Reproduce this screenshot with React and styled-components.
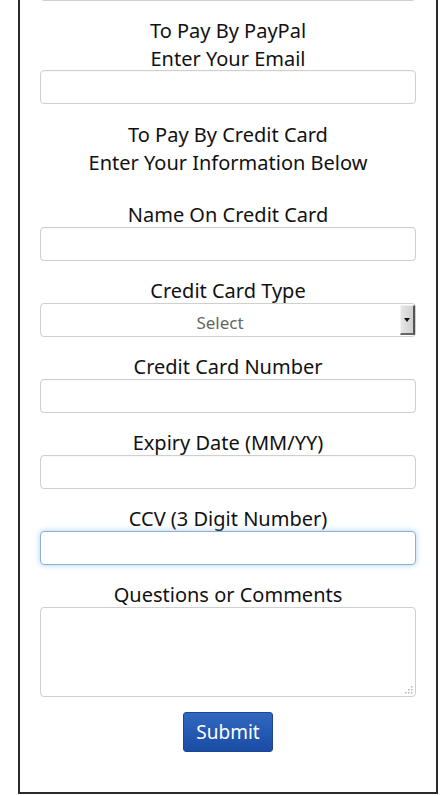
import React from "react";
import styled, { createGlobalStyle } from "styled-components";

const GlobalStyle = createGlobalStyle`
  html, body { margin: 0; padding: 0; background: #fff; }
  body { font-family: "Noto Sans", "DejaVu Sans", sans-serif; color: #111; overflow: hidden; }
`;

const Page = styled.div`
  padding: 0 10px 3px 18px;
  overflow: hidden;
`;

const Frame = styled.form`
  margin-top: -33px;
  border: 2px solid #2b2b2b;
  border-top: none;
  padding: 0 20px 40px;
  box-sizing: border-box;
  width: 420px;
  display: flex;
  flex-direction: column;
`;

const Heading = styled.div`
  margin-top: ${(p) => p.$top}px;
  margin-bottom: ${(p) => p.$bottom}px;
  font-size: 20px;
  line-height: 28px;
  text-align: center;
`;

const Field = styled.div`
  margin-top: ${(p) => p.$top ?? 18}px;
  display: flex;
  flex-direction: column;
`;

const Label = styled.label`
  font-size: 20px;
  line-height: 24px;
  text-align: center;
`;

const TextInput = styled.input`
  box-sizing: border-box;
  width: 100%;
  height: 34px;
  margin: 0;
  border: 1px solid ${(p) => (p.$focused ? "#8fb0cc" : "#cfcfcf")};
  border-radius: 4px;
  background: #fff;
  box-shadow: ${(p) =>
    p.$focused ? "0 0 6px rgba(102, 175, 233, 0.55)" : "inset 0 1px 1px rgba(0,0,0,0.03)"};
  font: inherit;
  font-size: 16px;
  padding: 0 10px;
  outline: none;
`;

const SelectWrap = styled.div`
  position: relative;
  height: 34px;
`;

const Select = styled.select`
  box-sizing: border-box;
  appearance: none;
  -webkit-appearance: none;
  width: 100%;
  height: 34px;
  margin: 0;
  border: 1px solid #cfcfcf;
  border-radius: 4px;
  background: #fff;
  font-family: inherit;
  font-size: 17px;
  color: #666;
  text-align: center;
  text-align-last: center;
  padding: 4px 16px 0 0;
  outline: none;
`;

const DropButton = styled.span`
  position: absolute;
  right: 1px;
  top: 2px;
  width: 15px;
  height: 30px;
  box-sizing: border-box;
  background: linear-gradient(to right, #e6e6e6, #cfcfcf);
  border-left: 1px solid #f4f4f4;
  border-right: 2px solid #555;
  border-bottom: 2px solid #666;
  border-top: 1px solid #eee;
  display: flex;
  align-items: center;
  justify-content: center;
  pointer-events: none;
  &::after {
    content: "";
    width: 0;
    height: 0;
    border-left: 3px solid transparent;
    border-right: 3px solid transparent;
    border-top: 4px solid #111;
  }
`;

const TextAreaWrap = styled.div`
  position: relative;
  height: 90px;
`;

const TextArea = styled.textarea`
  box-sizing: border-box;
  width: 100%;
  height: 90px;
  margin: 0;
  border: 1px solid #cfcfcf;
  border-radius: 4px;
  resize: none;
  font: inherit;
  font-size: 16px;
  display: block;
  outline: none;
`;

const Grip = styled.svg`
  position: absolute;
  right: 3px;
  bottom: 3px;
  width: 9px;
  height: 9px;
  pointer-events: none;
`;

const SubmitButton = styled.button`
  margin: 15px auto 0;
  width: 90px;
  height: 40px;
  border: 1px solid #1b4595;
  border-radius: 3px;
  background: linear-gradient(to bottom, #3068c0, #1a4ca4);
  color: #fff;
  font-family: inherit;
  font-size: 19px;
  line-height: 1;
  padding: 0;
  cursor: pointer;
`;

export default function App() {
  return (
    <Page>
      <GlobalStyle />
      <Frame onSubmit={(e) => e.preventDefault()}>
        <TextInput aria-label="previous field" />
        <Heading $top={16} $bottom={-3}>
          To Pay By PayPal
          <br />
          Enter Your Email
        </Heading>
        <TextInput aria-label="Email" />
        <Heading $top={17} $bottom={0}>
          To Pay By Credit Card
          <br />
          Enter Your Information Below
        </Heading>
        <Field $top={26}>
          <Label>Name On Credit Card</Label>
          <TextInput />
        </Field>
        <Field>
          <Label>Credit Card Type</Label>
          <SelectWrap>
            <Select defaultValue="">
              <option value="">Select</option>
              <option>Visa</option>
              <option>MasterCard</option>
              <option>American Express</option>
            </Select>
            <DropButton />
          </SelectWrap>
        </Field>
        <Field>
          <Label>Credit Card Number</Label>
          <TextInput />
        </Field>
        <Field>
          <Label>Expiry Date (MM/YY)</Label>
          <TextInput />
        </Field>
        <Field>
          <Label>CCV (3 Digit Number)</Label>
          <TextInput $focused />
        </Field>
        <Field>
          <Label>Questions or Comments</Label>
          <TextAreaWrap>
            <TextArea />
            <Grip viewBox="0 0 9 9">
              <g fill="#b5b5b5">
                <rect x="7" y="1" width="1.5" height="1.5" />
                <rect x="4" y="4" width="1.5" height="1.5" />
                <rect x="7" y="4" width="1.5" height="1.5" />
                <rect x="1" y="7" width="1.5" height="1.5" />
                <rect x="4" y="7" width="1.5" height="1.5" />
                <rect x="7" y="7" width="1.5" height="1.5" />
              </g>
            </Grip>
          </TextAreaWrap>
        </Field>
        <SubmitButton type="submit">Submit</SubmitButton>
      </Frame>
    </Page>
  );
}
